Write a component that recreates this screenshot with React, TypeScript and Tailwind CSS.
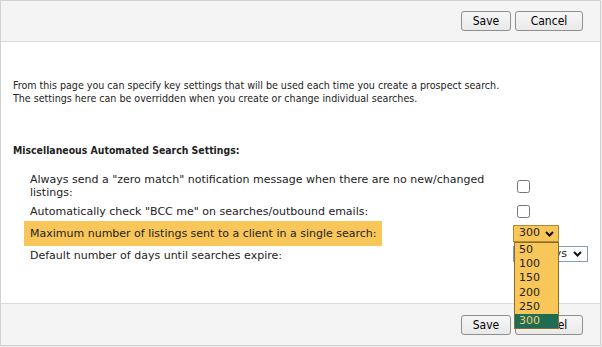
const font = { fontFamily: '"DejaVu Sans Condensed", "DejaVu Sans", Verdana, sans-serif' };
const rowFont = { fontFamily: '"DejaVu Sans", Verdana, sans-serif' };

function Btn({ label, width }: { label: string; width: string }) {
  return (
    <button
      className={`h-[20px] ${width} rounded-[3px] border border-[#8e8e8e] bg-gradient-to-b from-[#f7f7f7] to-[#e9e9e9] text-[12px] leading-none text-black`}
      style={font}
    >
      {label}
    </button>
  );
}

function Chevron() {
  return (
    <svg width="9" height="6" viewBox="0 0 9 6" className="shrink-0">
      <polyline points="1,1 4.5,4.5 8,1" fill="none" stroke="#111" strokeWidth="2" />
    </svg>
  );
}

const options = ["50", "100", "150", "200", "250", "300"];

export default function App() {
  return (
    <div className="w-[602px] h-[347px] bg-white text-[#222] text-[10.6px]" style={font}>
      <div className="relative w-[601px] h-[346px] border border-[#d2d2d2] shadow-[1px_1px_1px_rgba(0,0,0,0.08)] flex flex-col">
        <header className="h-[41px] shrink-0 bg-[#f4f4f4] border-b border-[#dcdcdc] flex items-center justify-end gap-[4px] pr-[17px]">
          <Btn label="Save" width="w-[50px]" />
          <Btn label="Cancel" width="w-[68px]" />
        </header>

        <main className="flex-1 pl-[12px] pt-[37px]">
          <p className="leading-[13px]">
            From this page you can specify key settings that will be used each time you create a prospect search.
            <br />
            The settings here can be overridden when you create or change individual searches.
          </p>

          <h2 className="mt-[39px] text-[10.4px] font-bold leading-[13px]">Miscellaneous Automated Search Settings:</h2>

          <div className="mt-[16px] flex flex-col text-[11px]" style={rowFont}>
            <div className="flex items-center">
              <div className="w-[500px] pl-[11px]">
                <span className="block w-[476px] px-[6px] leading-[13px]">
                  Always send a "zero match" notification message when there are no new/changed listings:
                </span>
              </div>
              <input type="checkbox" className="m-0 ml-[4px] w-[13px] h-[13px]" />
            </div>

            <div className="mt-[6px] flex items-center">
              <div className="w-[500px] pl-[11px]">
                <span className="block px-[6px] leading-[13px]">
                  Automatically check "BCC me" on searches/outbound emails:
                </span>
              </div>
              <input type="checkbox" className="m-0 ml-[4px] w-[13px] h-[13px]" />
            </div>

            <div className="mt-[3px] flex items-center">
              <div className="w-[500px] pl-[11px]">
                <span className="inline-block px-[6px] h-[25px] leading-[25px] bg-[#f9c65a]">
                  Maximum number of listings sent to a client in a single search:
                </span>
              </div>
              <div className="relative">
                <div className="w-[46px] h-[17px] border border-[#b08a34] bg-[#f9c65a] flex items-center justify-between pl-[5px] pr-[4px] text-[11px]">
                  <span>300</span>
                  <Chevron />
                </div>
                <ul className="absolute left-[1px] top-[17px] z-10 w-[45px] border border-[#8a6d2a] bg-[#f9c65a] text-[11px]">
                  {options.map((o) => (
                    <li
                      key={o}
                      className={`h-[14.2px] leading-[14px] pl-[4px] ${o === "300" ? "bg-[#1f6c55] text-[#f6cf6e]" : ""}`}
                    >
                      {o}
                    </li>
                  ))}
                </ul>
              </div>
            </div>

            <div className="mt-[3px] flex items-center">
              <div className="w-[500px] pl-[11px]">
                <span className="block px-[6px] leading-[13px]">Default number of days until searches expire:</span>
              </div>
              <div className="w-[75px] h-[16px] -mt-[3px] border border-[#7f9db9] bg-white flex items-center justify-between pl-[8px] pr-[5px] text-[11px]">
                <span>30 Days</span>
                <Chevron />
              </div>
            </div>
          </div>
        </main>

        <footer className="h-[42px] shrink-0 bg-[#f4f4f4] border-t border-[#dcdcdc] flex items-center justify-end gap-[4px] pr-[17px]">
          <Btn label="Save" width="w-[50px]" />
          <Btn label="Cancel" width="w-[68px]" />
        </footer>
      </div>
    </div>
  );
}
